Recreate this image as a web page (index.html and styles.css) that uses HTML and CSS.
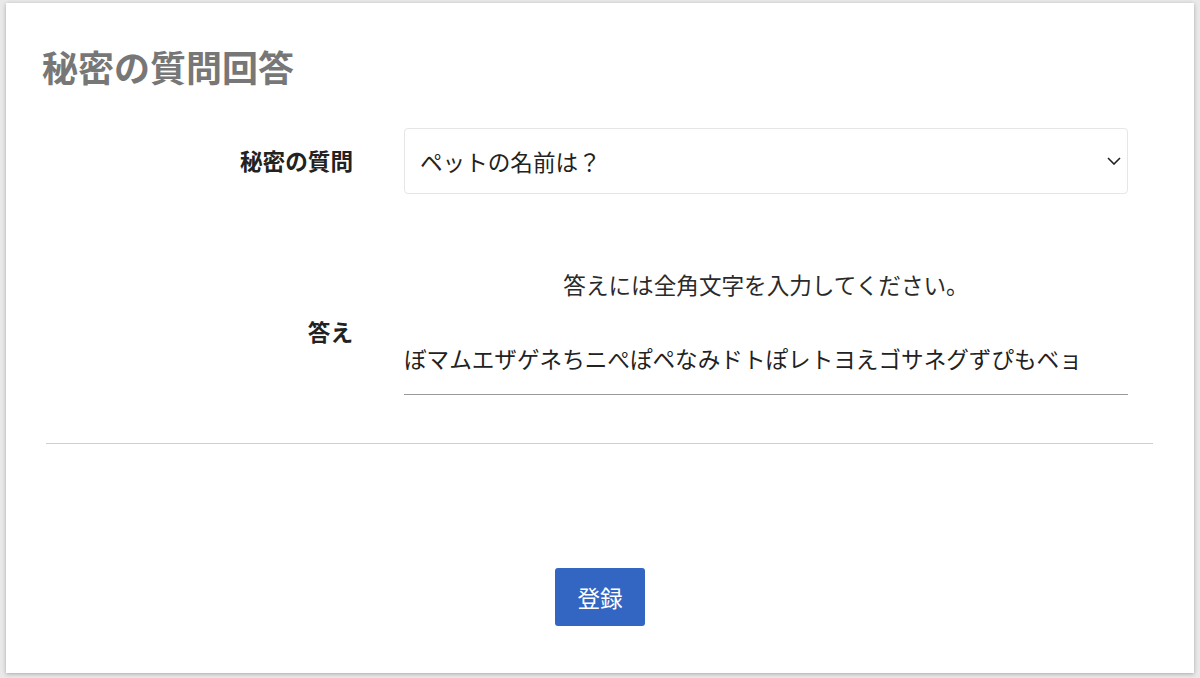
FILE: index.html
```html
<!DOCTYPE html>
<html lang="ja">
<head>
<meta charset="utf-8">
<title>秘密の質問回答</title>
<link rel="stylesheet" href="styles.css">
</head>
<body>
<div class="card">
  <h1 class="title">秘密の質問回答</h1>
  <form class="form">
    <div class="row row-question">
      <label class="label" for="q">秘密の質問</label>
      <div class="select-wrap">
        <select id="q" class="select">
          <option>ペットの名前は？</option>
        </select>
        <svg class="chevron" width="14" height="8" viewBox="0 0 14 8"><path d="M1 1 L7 7 L13 1" fill="none" stroke="#222" stroke-width="1.6"/></svg>
      </div>
    </div>
    <div class="row row-answer">
      <label class="label" for="a">答え</label>
      <div class="answer-col">
        <p class="help">答えには全角文字を入力してください。</p>
        <input id="a" class="input" type="text" value="ぼマムエザゲネちニぺぽペなみドトぽレトヨえゴサネグずぴもベョ">
      </div>
    </div>
    <hr class="divider">
    <div class="actions">
      <button type="button" class="btn">登録</button>
    </div>
  </form>
</div>
</body>
</html>
```
FILE: styles.css
```css
html, body {
  margin: 0;
  padding: 0;
}
body {
  background: #e9e9e9;
  font-family: "Noto Sans CJK JP", "Noto Sans", sans-serif;
  color: #222;
  height: 678px;
  overflow: hidden;
}
.card {
  box-sizing: border-box;
  margin: 3px 6px 0;
  height: 670px;
  background: #fff;
  box-shadow: 0 1px 4px rgba(0, 0, 0, 0.28);
  padding-top: 42px;
}
.title {
  margin: 0 0 0 36px;
  font-size: 36px;
  line-height: 42px;
  font-weight: 700;
  color: #777;
}
.form {
  margin: 41px 0 0;
}
.row {
  display: grid;
  grid-template-columns: 347px 724px;
  column-gap: 51px;
  align-items: center;
}
.label {
  text-align: right;
  font-size: 22.6px;
  font-weight: 700;
  color: #222;
  line-height: 32px;
}
.select-wrap {
  position: relative;
}
.select {
  display: block;
  width: 100%;
  box-sizing: border-box;
  height: 66px;
  border: 1px solid #e6e6e6;
  border-radius: 4px;
  background: #fff;
  padding: 0 40px 0 15px;
  font-family: inherit;
  font-size: 22.6px;
  color: #222;
  appearance: none;
  -webkit-appearance: none;
  outline: none;
}
.chevron {
  position: absolute;
  right: 7px;
  top: 29px;
  pointer-events: none;
}
.row-answer {
  margin-top: 75px;
}
.answer-col {
  display: flex;
  flex-direction: column;
}
.help {
  margin: 0;
  text-align: center;
  font-size: 22.6px;
  line-height: 32px;
  color: #2a2a2a;
}
.input {
  margin-top: 33px;
  box-sizing: border-box;
  height: 61px;
  padding: 8px 0 20px;
  border: none;
  border-bottom: 1.5px solid #999;
  font-family: inherit;
  font-size: 22.6px;
  line-height: 32px;
  color: #222;
  background: transparent;
  outline: none;
}
.divider {
  margin: 48px 41px 0 40px;
  border: none;
  border-top: 1.5px solid #cfcfcf;
  height: 0;
}
.actions {
  display: flex;
  justify-content: center;
  margin-top: 124px;
}
.btn {
  width: 90px;
  height: 58px;
  border: none;
  border-radius: 3px;
  background: #3366c2;
  color: #fff;
  font-family: inherit;
  font-size: 22.6px;
  cursor: pointer;
}
```
